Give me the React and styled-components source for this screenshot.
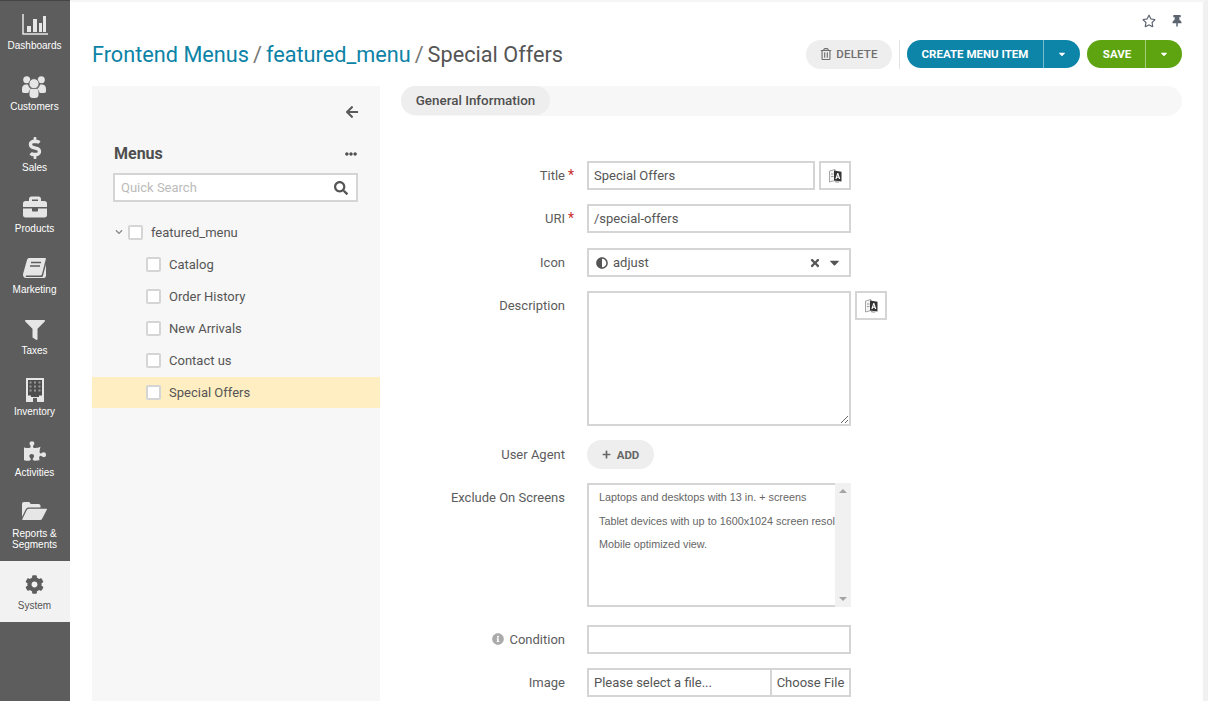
import React from "react";
import styled, { createGlobalStyle } from "styled-components";
import {
  FaBriefcase,
  FaCaretDown,
  FaCog,
  FaDollarSign,
  FaEllipsisH,
  FaFilter,
  FaInfoCircle,
  FaPlus,
  FaPuzzlePiece,
  FaSearch,
  FaTimes,
  FaArrowLeft,
  FaAdjust,
  FaChevronDown,
  FaRegStar,
  FaThumbtack,
  FaRegTrashAlt,
} from "react-icons/fa";

const GlobalStyle = createGlobalStyle`
  html, body {
    margin: 0;
    height: 100%;
    overflow: hidden;
    background: #fff;
  }
  * { box-sizing: border-box; }
  body {
    font-family: Roboto, "Liberation Sans", Arial, sans-serif;
    font-size: 13px;
    color: #555;
  }
`;

const Page = styled.div`
  display: flex;
  height: 701px;
  width: 1208px;
  overflow: hidden;
`;

// left navigation
const Sidebar = styled.nav`
  width: 70px;
  flex: none;
  background: #5d5d5d;
  border-top: 1px solid #444;
  display: flex;
  flex-direction: column;
`;

const NavItem = styled.a`
  display: flex;
  flex-direction: column;
  align-items: center;
  height: ${({ $tall }) => ($tall ? "72px" : "61px")};
  padding: 12px 1px 0 0;
  background: ${({ $active }) => ($active ? "#f2f2f2" : "transparent")};
  color: ${({ $active }) => ($active ? "#555" : "#fff")};
  font-family: "Liberation Sans", Arial, sans-serif;
  font-size: 10px;
  line-height: 11px;
  text-align: center;
  white-space: pre-line;
  svg {
    color: ${({ $active }) => ($active ? "#5d5d5d" : "#e6e6e6")};
  }
`;

const NavIcon = styled.span`
  height: 25px;
  display: flex;
  align-items: center;
  justify-content: center;
  margin-bottom: 2px;
  transform: translateY(${({ $dy }) => $dy || 0}px);
`;

const Main = styled.main`
  flex: 1;
  min-width: 0;
  display: flex;
  flex-direction: column;
  padding: 0 21px 0 22px;
  border-top: 2px solid #f5f5f5;
  border-right: 5px solid #f1f1f1;
`;

const TopIcons = styled.div`
  display: flex;
  justify-content: flex-end;
  align-items: center;
  gap: 15px;
  height: 30px;
  padding: 8px 0 0;
  margin-right: -1px;
  color: #5c6470;
`;

const Header = styled.header`
  display: flex;
  justify-content: space-between;
  align-items: center;
  height: 28px;
  margin-top: 8px;
`;

const Crumbs = styled.h1`
  margin: 0;
  padding-top: 2px;
  font-weight: 400;
  font-size: 21.7px;
  line-height: 28px;
  color: #555;
`;

const CrumbLink = styled.a`
  color: #0c83a6;
`;

const CrumbSep = styled.span`
  color: #777;
  margin: 0 4px;
`;

const Actions = styled.div`
  display: flex;
  align-items: center;
`;

const DeleteButton = styled.button`
  display: flex;
  align-items: center;
  justify-content: center;
  gap: 4px;
  width: 86px;
  height: 29px;
  border: 0;
  border-radius: 15px;
  background: #eee;
  color: #6e6e6e;
  font: 500 11.5px Roboto, sans-serif;
  letter-spacing: 0.2px;
  padding: 0;
`;

const Divider = styled.span`
  width: 1px;
  height: 29px;
  background: #e3e3e3;
  margin: 0 7px;
`;

const SplitButton = styled.div`
  display: flex;
  height: 28px;
  border-radius: 14px;
  overflow: hidden;
  background: ${({ $color }) => $color};
  color: #fff;
  font: 700 11.5px Roboto, sans-serif;
  margin-right: ${({ $mr }) => $mr || 0}px;
`;

const SplitLabel = styled.span`
  width: ${({ $w }) => $w}px;
  display: flex;
  align-items: center;
  justify-content: center;
  padding-left: ${({ $pl }) => $pl || 0}px;
  border-right: 1px solid rgba(255, 255, 255, 0.45);
`;

const SplitCaret = styled.span`
  width: ${({ $w }) => $w}px;
  display: flex;
  align-items: center;
  justify-content: center;
`;

const Columns = styled.div`
  flex: 1;
  display: flex;
  gap: 21px;
  margin-top: 18px;
  min-height: 0;
`;

// tree panel
const TreePanel = styled.aside`
  width: 288px;
  flex: none;
  background: #f7f7f7;
  display: flex;
  flex-direction: column;
`;

const CollapseRow = styled.div`
  display: flex;
  justify-content: flex-end;
  padding: 19px 21px 0 0;
  height: 58px;
  color: #5a5a5a;
`;

const PanelTitle = styled.div`
  display: flex;
  justify-content: space-between;
  align-items: center;
  padding: 0 23px 0 22px;
  font-size: 16px;
  line-height: 20px;
  font-weight: 700;
  color: #4f4f4f;
`;

const SearchBox = styled.div`
  display: flex;
  align-items: center;
  justify-content: space-between;
  height: 29px;
  margin: 9px 22px 14px 21px;
  padding: 0 8px 0 6px;
  background: #fff;
  border: 2px solid #d5d5d5;
  color: #bbb;
  svg {
    color: #555;
  }
`;

const TreeRow = styled.div`
  display: flex;
  align-items: center;
  height: ${({ $selected }) => ($selected ? "31px" : "32px")};
  margin-top: ${({ $selected }) => ($selected ? "1px" : "0")};
  padding-left: ${({ $root }) => ($root ? "23px" : "54px")};
  background: ${({ $selected }) => ($selected ? "#ffeec2" : "transparent")};
  color: #555;
`;

const Chevron = styled.span`
  width: 13px;
  display: flex;
  color: #888;
`;

const Checkbox = styled.span`
  width: 15px;
  height: 15px;
  background: #fff;
  border: 2px solid #d5d5d5;
  border-radius: 2px;
  margin-right: 8px;
`;

// form side
const FormColumn = styled.section`
  flex: 1;
  min-width: 0;
`;

const TabBar = styled.div`
  height: 30px;
  border-radius: 15px;
  background: #f7f7f7;
`;

const Tab = styled.span`
  display: inline-flex;
  align-items: center;
  justify-content: center;
  width: 149px;
  height: 29px;
  border-radius: 15px;
  background: #eee;
  font-size: 13.4px;
  font-weight: 500;
  color: #4f4f4f;
`;

const Form = styled.div`
  padding-top: 45px;
`;

const Row = styled.div`
  display: flex;
  align-items: flex-start;
  margin-bottom: ${({ $mb }) => $mb ?? 14}px;
`;

const Label = styled.label`
  width: 186px;
  flex: none;
  height: 28px;
  display: flex;
  align-items: center;
  justify-content: flex-end;
  color: #5c5c5c;
`;

const Req = styled.span`
  width: 22px;
  flex: none;
  color: #c9302c;
  padding-left: 3px;
  font-size: 14px;
`;

const Input = styled.div`
  display: flex;
  align-items: center;
  justify-content: space-between;
  width: ${({ $w }) => $w || 264}px;
  height: 29px;
  padding: 0 5px;
  background: #fff;
  border: 2px solid #d5d5d5;
  color: #555;
`;

const TextArea = styled.textarea`
  display: block;
  width: 264px;
  height: 135px;
  margin: 0;
  padding: 5px;
  resize: both;
  background: #fff;
  border: 2px solid #d5d5d5;
  border-radius: 0;
  outline: none;
`;

const TranslateButton = styled.button`
  width: 32px;
  height: 29px;
  margin-left: 4px;
  padding: 0;
  display: flex;
  align-items: center;
  justify-content: center;
  background: #fff;
  border: 2px solid #d5d5d5;
`;

const SelectIcon = styled.span`
  display: flex;
  align-items: center;
  gap: 5px;
  padding-left: 2px;
`;

const SelectTools = styled.span`
  display: flex;
  align-items: center;
  gap: 6px;
  padding-right: 2px;
  color: #555;
`;

const AddButton = styled.button`
  display: flex;
  align-items: center;
  justify-content: center;
  gap: 6px;
  width: 67px;
  height: 29px;
  padding: 0;
  border: 0;
  border-radius: 15px;
  background: #eee;
  color: #666;
  font: 700 11.5px Roboto, sans-serif;
`;

const ListBox = styled.div`
  display: flex;
  width: 264px;
  height: 124px;
  background: #fff;
  border: 2px solid #d5d5d5;
`;

const ListItems = styled.div`
  flex: 1;
  min-width: 0;
  overflow: hidden;
  padding: 1px 0 0 10px;
  font-family: "Liberation Sans", Arial, sans-serif;
  font-size: 10.8px;
  line-height: 23.5px;
  white-space: nowrap;
  color: #666;
`;

const FakeScroll = styled.div`
  width: 16px;
  flex: none;
  background: #f1f1f1;
  display: flex;
  flex-direction: column;
  justify-content: space-between;
  align-items: center;
  padding: 6px 0;
  margin: -2px -2px -2px 0;
`;

const Arrow = styled.span`
  width: 0;
  height: 0;
  border-left: 4px solid transparent;
  border-right: 4px solid transparent;
  ${({ $up }) =>
    $up ? "border-bottom: 4px solid #a3a3a3;" : "border-top: 4px solid #a3a3a3;"}
`;

const ConditionLabel = styled.span`
  display: inline-flex;
  align-items: center;
  gap: 5px;
  svg {
    color: #aaa;
  }
`;

const FileInput = styled.div`
  display: flex;
  width: 264px;
  height: 29px;
  background: #fff;
  border: 2px solid #d5d5d5;
  color: #555;
`;

const FileName = styled.span`
  flex: 1;
  display: flex;
  align-items: center;
  padding-left: 5px;
`;

const FileButton = styled.span`
  width: 79px;
  display: flex;
  align-items: center;
  justify-content: center;
  border-left: 2px solid #d5d5d5;
`;

function ChartIcon() {
  return (
    <svg width="26" height="21" viewBox="0 0 26 21">
      <path d="M1 0v20h25" fill="none" stroke="currentColor" strokeWidth="1.5" />
      <path d="M5 12h4v6H5zM11 5h4v13h-4zM17 9h3v9h-3zM21 2h3v16h-3z" fill="currentColor" />
    </svg>
  );
}

function UsersIcon() {
  return (
    <svg width="25" height="22" viewBox="0 0 25 22">
      <g fill="currentColor">
        <circle cx="4.700" cy="3.700" r="3.500" />
        <circle cx="19.300" cy="3.700" r="3.500" />
        <path d="M0 13c0-3 1.500-4.500 4-4.500h2c.5 2 1.500 3.500 3 4.500-1.500 1-2.500 2.500-2.700 4H2c-1.500 0-2-1-2-2zM24 13c0-3-1.500-4.500-4-4.500h-2c-.5 2-1.500 3.500-3 4.500 1.500 1 2.500 2.500 2.700 4H22c1.500 0 2-1 2-2z" />
        <path d="M7.500 16c0-2 1.200-3.500 3-3.500h3c1.800 0 3 1.500 3 3.500v3c0 2-1.500 3-3 3h-3c-1.500 0-3-1-3-3z" />
      </g>
      <circle cx="12" cy="7.700" r="5" fill="currentColor" stroke="#5d5d5d" strokeWidth="0.8" />
    </svg>
  );
}

function BookIcon() {
  return (
    <svg width="23" height="20" viewBox="0 0 23 20">
      <path
        d="M6 0h16c1 0 1 .6.8 1.300L19 16c-.3 1-1 1.500-2 1.500H4c-1 0-1.500.4-1.300 1 .1.400.6.600 1.300.600h14.500c.8 0 1.200-.4 1.400-1L23 6.500v11c0 1-.8 2.500-2 2.500H3c-2 0-3-1.500-3-3 0-1 .2-2 .6-3L4 2C4.300 1 5 0 6 0z"
        fill="currentColor"
      />
      <path d="M8 4.500h10M7 8h10" stroke="#5d5d5d" strokeWidth="1.400" />
    </svg>
  );
}

function BuildingIcon() {
  return (
    <svg width="18" height="24" viewBox="0 0 18 24">
      <path d="M0 0h18v24H11v-4H7v4H0z" fill="currentColor" />
      <path d="M2 2h14v15.500h-3V19H5v-1.500H2z" fill="#4d4d4d" />
      <path
        d="M3.500 3.500h2v2h-2zM8 3.500h2v2H8zM12.500 3.500h2v2h-2zM3.500 7.500h2v2h-2zM8 7.500h2v2H8zM12.500 7.500h2v2h-2zM3.500 11.500h2v2h-2zM8 11.500h2v2H8zM12.500 11.500h2v2h-2z"
        fill="#9a9a9a"
      />
    </svg>
  );
}

function FolderIcon() {
  return (
    <svg width="25" height="18" viewBox="0 0 25 18">
      <path
        d="M0 15V2C0 .8.800 0 2 0h4.500C7.700 0 8.500.8 8.500 2h8c1.200 0 2 .8 2 2v1.500H7c-1.500 0-2.500.6-3.200 1.800z"
        fill="currentColor"
      />
      <path d="M7 6.800h17.500c.5 0 .6.400.4.800L20 17c-.4.700-1 1-1.800 1H.8c-.5 0-.7-.4-.4-.9L4.800 8C5.300 7.200 6 6.800 7 6.800z" fill="currentColor" />
    </svg>
  );
}

function TranslateIcon() {
  return (
    <svg width="13" height="14" viewBox="0 0 13 14">
      <path d="M.5 2L6 .5v11L.5 13z" fill="#f4f4f4" stroke="#a5a5a5" strokeWidth="1" />
      <path d="M2 5h2.500M2 7.500h2.500" stroke="#999" strokeWidth="1" />
      <path d="M5 1.500l7.500 1.300v9.700L5 11.500z" fill="#333" />
      <path d="M6.300 10l2-6h1l2 6H10l-.4-1.300H8l-.4 1.300zM8.300 7.700h1l-.5-2z" fill="#fff" />
      <path d="M6 12l4.500.7-1 1-3.500-.5z" fill="#999" />
    </svg>
  );
}

const navItems = [
  { label: "Dashboards", icon: <ChartIcon />, dy: -1 },
  { label: "Customers", icon: <UsersIcon /> },
  { label: "Sales", icon: <FaDollarSign size={22} /> },
  { label: "Products", icon: <FaBriefcase size={24} />, dy: -2 },
  { label: "Marketing", icon: <BookIcon />, dy: -2 },
  { label: "Taxes", icon: <FaFilter size={20} />, dy: -1 },
  { label: "Inventory", icon: <BuildingIcon />, dy: -2 },
  { label: "Activities", icon: <FaPuzzlePiece size={22} />, dy: -2 },
  { label: "Reports &\nSegments", icon: <FolderIcon />, tall: true, dy: -3 },
  { label: "System", icon: <FaCog size={19} />, active: true, dy: -1 },
];

const treeItems = ["Catalog", "Order History", "New Arrivals", "Contact us", "Special Offers"];

export default function App() {
  return (
    <Page>
      <GlobalStyle />
      <Sidebar>
        {navItems.map((item) => (
          <NavItem key={item.label} $active={item.active} $tall={item.tall}>
            <NavIcon $dy={item.dy}>{item.icon}</NavIcon>
            {item.label}
          </NavItem>
        ))}
      </Sidebar>
      <Main>
        <TopIcons>
          <FaRegStar size={14} />
          <FaThumbtack size={12} />
        </TopIcons>
        <Header>
          <Crumbs>
            <CrumbLink>Frontend Menus</CrumbLink>
            <CrumbSep>/</CrumbSep>
            <CrumbLink>featured_menu</CrumbLink>
            <CrumbSep>/</CrumbSep>
            Special Offers
          </Crumbs>
          <Actions>
            <DeleteButton>
              <FaRegTrashAlt size={12} />
              DELETE
            </DeleteButton>
            <Divider />
            <SplitButton $color="#0d85a8" $mr={7}>
              <SplitLabel $w={137}>CREATE MENU ITEM</SplitLabel>
              <SplitCaret $w={36}>
                <FaCaretDown size={10} />
              </SplitCaret>
            </SplitButton>
            <SplitButton $color="#5da410">
              <SplitLabel $w={59} $pl={2}>SAVE</SplitLabel>
              <SplitCaret $w={36}>
                <FaCaretDown size={10} />
              </SplitCaret>
            </SplitButton>
          </Actions>
        </Header>
        <Columns>
          <TreePanel>
            <CollapseRow>
              <FaArrowLeft size={14} />
            </CollapseRow>
            <PanelTitle>
              Menus
              <FaEllipsisH size={12} />
            </PanelTitle>
            <SearchBox>
              Quick Search
              <FaSearch size={14} />
            </SearchBox>
            <TreeRow $root>
              <Chevron>
                <FaChevronDown size={8} />
              </Chevron>
              <Checkbox />
              featured_menu
            </TreeRow>
            {treeItems.map((name) => (
              <TreeRow key={name} $selected={name === "Special Offers"}>
                <Checkbox />
                {name}
              </TreeRow>
            ))}
          </TreePanel>
          <FormColumn>
            <TabBar>
              <Tab>General Information</Tab>
            </TabBar>
            <Form>
              <Row>
                <Label>Title<Req>*</Req></Label>
                <Input $w={228}>Special Offers</Input>
                <TranslateButton><TranslateIcon /></TranslateButton>
              </Row>
              <Row $mb={15}>
                <Label>URI<Req>*</Req></Label>
                <Input>/special-offers</Input>
              </Row>
              <Row>
                <Label>Icon<Req /></Label>
                <Input>
                  <SelectIcon><FaAdjust size={12} /> adjust</SelectIcon>
                  <SelectTools>
                    <FaTimes size={12} />
                    <FaCaretDown size={15} />
                  </SelectTools>
                </Input>
              </Row>
              <Row>
                <Label>Description<Req /></Label>
                <TextArea />
                <TranslateButton><TranslateIcon /></TranslateButton>
              </Row>
              <Row>
                <Label>User Agent<Req /></Label>
                <AddButton><FaPlus size={9} /> ADD</AddButton>
              </Row>
              <Row $mb={18}>
                <Label>Exclude On Screens<Req /></Label>
                <ListBox>
                  <ListItems>
                    <div>Laptops and desktops with 13 in. + screens</div>
                    <div>Tablet devices with up to 1600x1024 screen resolution</div>
                    <div>Mobile optimized view.</div>
                  </ListItems>
                  <FakeScroll>
                    <Arrow $up />
                    <Arrow />
                  </FakeScroll>
                </ListBox>
              </Row>
              <Row>
                <Label>
                  <ConditionLabel><FaInfoCircle size={12} /> Condition</ConditionLabel>
                  <Req />
                </Label>
                <Input />
              </Row>
              <Row>
                <Label>Image<Req /></Label>
                <FileInput>
                  <FileName>Please select a file...</FileName>
                  <FileButton>Choose File</FileButton>
                </FileInput>
              </Row>
            </Form>
          </FormColumn>
        </Columns>
      </Main>
    </Page>
  );
}
